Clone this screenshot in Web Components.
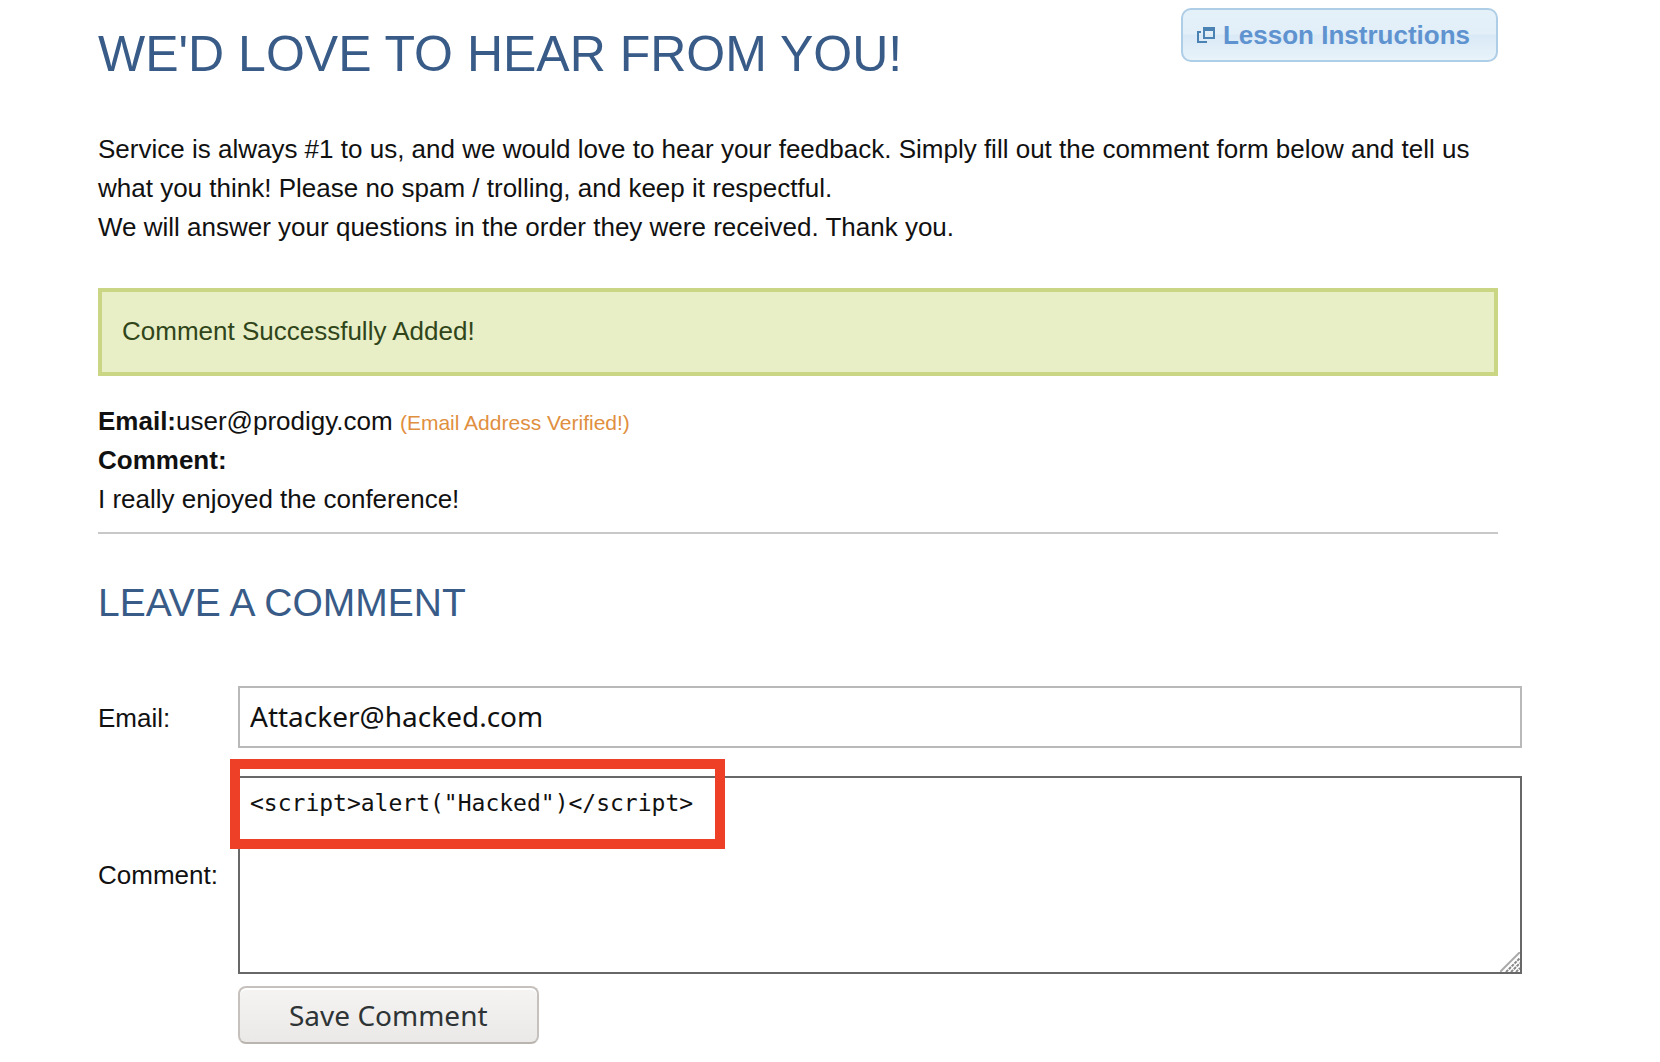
<!DOCTYPE html>
<html lang="en">
<head>
<meta charset="utf-8">
<title>We'd love to hear from you</title>
<style>
  body { margin: 0; background: #fff; color: #111; font: 26px/38px "Liberation Sans", Arial, sans-serif; }
</style>
</head>
<body>
<contact-page></contact-page>
<script>
const define = (name, html) => customElements.define(name, class extends HTMLElement {
  constructor() {
    super();
    const t = document.createElement('template');
    t.innerHTML = html;
    this.attachShadow({ mode: 'open' }).append(t.content.cloneNode(true));
  }
});

define('lesson-button', `
<style>
  :host { display: block; flex: none; }
  button { display: flex; align-items: center; gap: 8px; box-sizing: border-box; height: 54px; margin: 0;
    padding: 0 26px 0 14px; border: 2px solid #aecde6; border-radius: 10px; cursor: pointer;
    background: linear-gradient(#e4f1f9 0, #e2eff8 48%, #d9e9f6 50%, #deecf7 66%, #e8f3fa 100%);
    font: bold 26px/50px "Liberation Sans", Arial, sans-serif; color: #5f93d0; }
  svg { display: block; width: 18px; height: 16px; }
</style>
<button type="button">
  <svg viewBox="0 0 18 16" shape-rendering="crispEdges" aria-hidden="true" fill="#4a82b4">
    <path fill-rule="evenodd" d="M6 0H18V12H6ZM8 4V10H16V4Z"/>
    <path d="M0 4H4V6H2V14H10V16H0Z"/>
  </svg>
  <slot></slot>
</button>`);

define('page-header', `
<style>
  :host { display: flex; justify-content: space-between; align-items: flex-start; }
  h1 { margin: 16px 0 0; font-size: 50px; line-height: 60px; font-weight: 400; color: #385b88; }
</style>
<h1><slot></slot></h1>
<slot name="action"></slot>`);

define('success-notice', `
<style>
  :host { display: block; padding: 20px 20px 22px; border: 4px solid #cad684; background: #e8efc6; color: #30451a; }
</style>
<slot></slot>`);

define('comment-entry', `
<style>
  :host { display: block; padding-bottom: 13px; border-bottom: 2px solid #c8c8c8; line-height: 39px; }
  div { white-space: pre-wrap; }
  small { font-size: 21px; line-height: 20px; color: #e08f3f; }
</style>
<div><b>Email:</b><slot name="email"></slot> <small><slot name="status"></slot></small></div>
<div><b>Comment:</b></div>
<div><slot></slot></div>`);

define('comment-form', `
<style>
  :host { display: block; }
  h2 { margin: 0; font-size: 39px; line-height: 46px; font-weight: 400; color: #385b88; }
  form { display: grid; grid-template-columns: 140px 1fr; align-items: center; margin: 60px -24px 0 0; }
  label { padding-top: 2px; }
  label[for="comment"] { padding-top: 28px; }
  input, textarea { display: block; box-sizing: border-box; width: 100%; margin: 0; background: #fff; color: #111; border-radius: 0; outline: 0; }
  input { height: 62px; padding: 0 10px 2px; border: 2px solid #b9b9b9; font: 28px/40px "Noto Sans", sans-serif; }
  .area { position: relative; margin-top: 28px; }
  textarea { height: 198px; padding: 10px; border: 2px solid #686868; resize: none; font: 23px/30px "DejaVu Sans Mono", monospace; }
  .mark { position: absolute; left: -8px; top: -17px; width: 475px; height: 70px; border: 10px solid #ed4027; pointer-events: none; }
  .grip { position: absolute; right: 2px; bottom: 2px; width: 20px; height: 20px; pointer-events: none; }
  button { grid-column: 2; justify-self: start; height: 58px; margin: 12px 0 0; padding: 0 49px; border: 2px solid #c6c1bd; border-bottom-color: #bab4af; border-radius: 8px;
    background: linear-gradient(#f6f4f3, #eae9e8); box-shadow: inset 0 2px #fff; color: #2e3436; font: 28px/50px "Noto Sans", sans-serif; }
</style>
<h2>LEAVE A COMMENT</h2>
<form>
  <label for="email">Email:</label>
  <input id="email" type="text" value="Attacker@hacked.com">
  <label for="comment">Comment:</label>
  <div class="area">
    <textarea id="comment" spellcheck="false">&lt;script&gt;alert("Hacked")&lt;/script&gt;</textarea>
    <svg class="grip" viewBox="0 0 20 20" aria-hidden="true" fill="none" stroke-width="2">
      <path stroke="#aaa" d="M0 20L20 0"/>
      <path stroke="#888" stroke-dasharray="3 1" d="M6 20L20 6M11 20L20 11M16 20L20 16"/>
    </svg>
    <div class="mark"></div>
  </div>
  <button type="button">Save Comment</button>
</form>`);

define('contact-page', `
<style>
  :host { display: block; padding: 8px 162px 16px 98px; }
  p { margin: 46px 0 0; line-height: 39px; }
  success-notice { margin-top: 41px; }
  comment-entry { margin-top: 26px; }
  comment-form { margin-top: 46px; }
</style>
<page-header>WE'D LOVE TO HEAR FROM YOU!<lesson-button slot="action">Lesson Instructions</lesson-button></page-header>
<p>Service is always #1 to us, and we would love to hear your feedback. Simply fill out the comment form below and tell us what you think! Please no spam / trolling, and keep it respectful.<br>We will answer your questions in the order they were received. Thank you.</p>
<success-notice>Comment Successfully Added!</success-notice>
<comment-entry><span slot="email">user@prodigy.com</span><span slot="status">(Email Address Verified!)</span>I really enjoyed the conference!</comment-entry>
<comment-form></comment-form>`);
</script>
</body>
</html>
